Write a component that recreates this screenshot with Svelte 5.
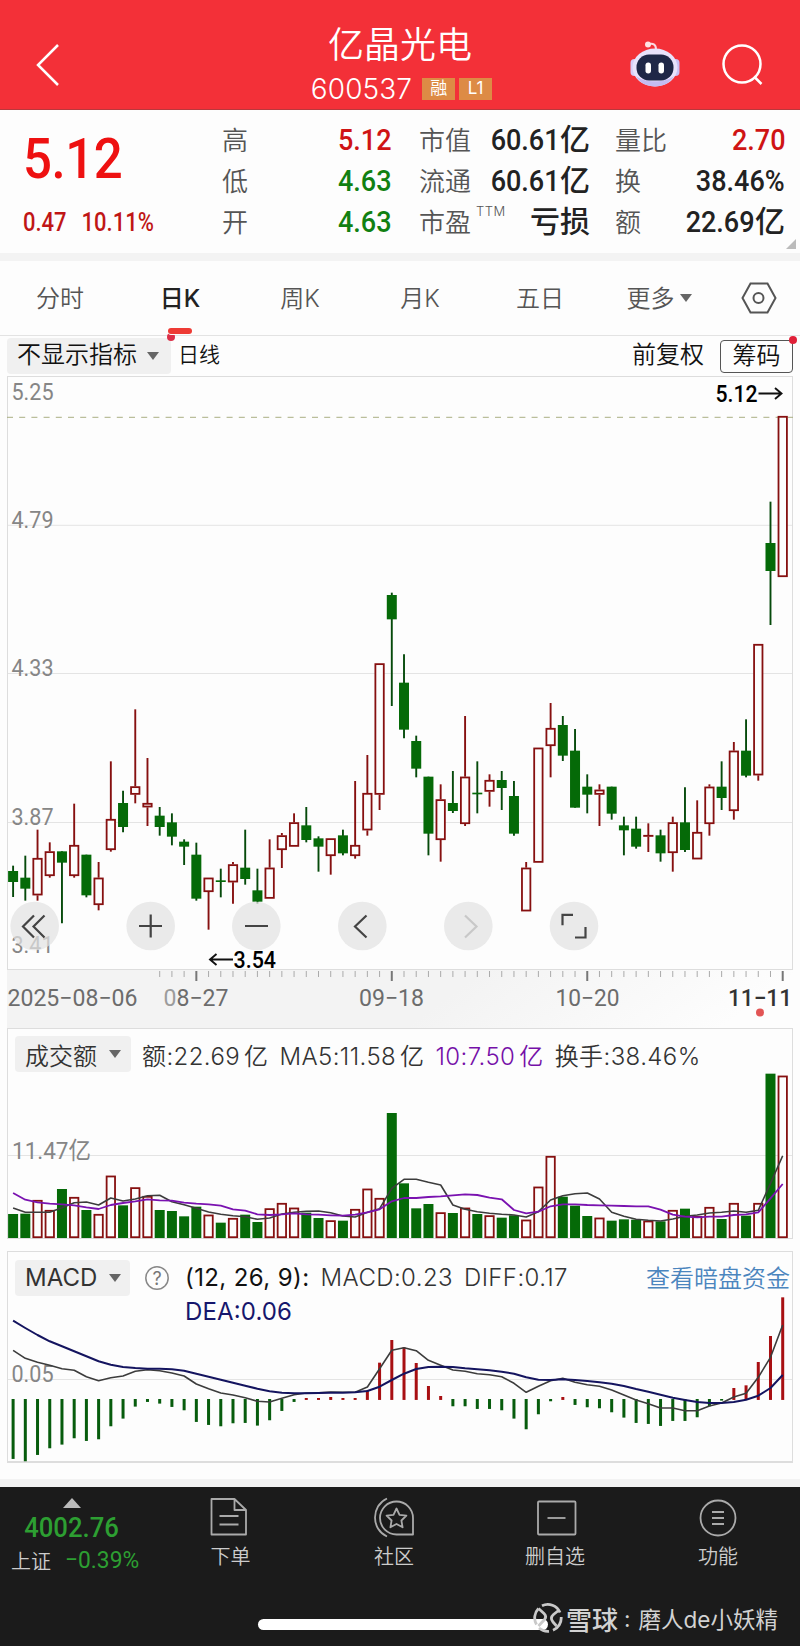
<script>
  // one entry per trading day: [direction, high, body top, body bottom, low]
  // values are device pixels at 3x density, see candleY
  const candles = [
    ['d', 617, 633, 666, 711], ['d', 587, 653, 686, 722], ['u', 509, 594, 706, 722], ['u', 547, 574, 648, 653],
    ['d', 574, 574, 608, 790], ['u', 431, 555, 648, 653], ['d', 584, 584, 706, 712], ['u', 606, 653, 735, 751],
    ['u', 304, 477, 570, 575], ['d', 392, 429, 501, 517], ['u', 148, 379, 404, 430], ['u', 294, 429, 442, 498],
    ['d', 441, 467, 501, 527], ['d', 460, 487, 530, 556], ['d', 538, 545, 560, 615], ['d', 548, 584, 716, 722],
    ['u', 653, 653, 696, 809], ['d', 626, 661, 666, 712], ['u', 606, 613, 667, 731], ['d', 509, 623, 657, 674],
    ['d', 626, 691, 725, 731], ['u', 538, 623, 716, 716], ['u', 519, 526, 570, 624], ['u', 460, 487, 560, 560],
    ['d', 441, 496, 540, 547], ['d', 529, 535, 560, 635], ['u', 535, 535, 588, 644], ['d', 509, 526, 580, 586],
    ['u', 363, 555, 588, 596], ['u', 285, 399, 511, 527], ['u', 10, 10, 404, 450], ['d', -202, -195, -122, 138],
    ['d', -17, 68, 209, 235], ['d', 227, 243, 326, 352], ['d', 350, 350, 521, 586], ['u', 373, 418, 540, 605],
    ['d', 333, 429, 453, 459], ['u', 168, 350, 492, 498], ['d', 304, 398, 403, 460], ['u', 343, 360, 395, 440],
    ['d', 333, 360, 384, 450], ['d', 363, 408, 521, 527], ['u', 606, 623, 754, 754], ['u', 263, 263, 608, 608],
    ['u', 129, 204, 258, 352], ['d', 168, 195, 287, 303], ['d', 207, 272, 443, 443], ['d', 343, 380, 404, 460],
    ['u', 373, 389, 404, 498], ['d', 380, 380, 461, 479], ['d', 470, 496, 511, 586], ['d', 470, 506, 560, 566],
    ['u', 490, 525, 530, 576], ['d', 509, 526, 580, 605], ['u', 470, 487, 579, 635], ['d', 382, 487, 570, 576],
    ['u', 421, 516, 598, 598], ['u', 373, 380, 492, 527], ['d', 304, 380, 414, 450], ['u', 246, 272, 453, 479],
    ['d', 178, 272, 347, 352], ['u', -48, -48, 346, 362], ['d', -475, -351, -267, -105], ['u', -732, -732, -249, -249]
  ];

  const volumes = [
    582, 581, 540, 570, 507, 531, 570, 582, 467, 556, 502, 528, 570, 573, 589, 560, 584, 608, 594, 584, 606, 565,
    549, 563, 578, 594, 601, 602, 567, 506, 534, 279, 490, 565, 552, 577, 579, 563, 582, 586, 593, 586, 599, 500,
    408, 530, 557, 588, 593, 602, 598, 599, 602, 604, 570, 566, 588, 561, 597, 549, 587, 549, 161, 167
  ];
  const ma5 = [
    564, 577, 577, 577, 563, 548, 546, 555, 534, 543, 537, 527, 526, 545, 554, 565, 576, 583, 587, 590, 598, 594,
    582, 577, 574, 573, 578, 588, 591, 577, 566, 505, 478, 478, 487, 495, 555, 568, 575, 580, 583, 585, 591, 575,
    540, 527, 521, 519, 537, 577, 589, 598, 601, 603, 597, 589, 585, 579, 577, 573, 577, 571, 490, 407
  ];
  const ma10 = [
    519, 539, 547, 551, 553, 556, 562, 567, 555, 549, 544, 538, 541, 542, 548, 551, 553, 557, 568, 572, 583, 585,
    583, 580, 583, 584, 586, 587, 584, 577, 568, 544, 534, 534, 531, 529, 526, 523, 525, 533, 538, 570, 580, 575,
    559, 553, 553, 555, 556, 557, 558, 559, 559, 569, 584, 590, 592, 590, 590, 585, 583, 577, 535, 492
  ];

  const macd = [
    641, 648, 629, 609, 598, 579, 587, 582, 543, 520, 484, 470, 475, 485, 495, 530, 539, 543, 534, 533, 541, 525,
    497, 470, 459, 459, 456, 459, 459, 436, 353, 285, 307, 354, 423, 453, 483, 483, 491, 491, 495, 520, 552, 507,
    468, 456, 479, 486, 489, 501, 517, 533, 536, 542, 527, 527, 516, 483, 466, 429, 421, 351, 273, 157
  ];
  const diff = [
    316, 340, 352, 361, 371, 376, 395, 407, 398, 393, 379, 374, 377, 384, 393, 417, 431, 444, 450, 458, 469, 471,
    460, 449, 444, 443, 441, 442, 442, 426, 371, 316, 308, 317, 346, 361, 375, 379, 386, 389, 395, 415, 442, 424,
    407, 400, 412, 419, 424, 435, 450, 465, 476, 489, 489, 497, 497, 483, 474, 456, 445, 397, 337, 240
  ];
  const dea = [
    227, 249, 270, 289, 304, 319, 334, 349, 359, 366, 369, 371, 371, 373, 377, 386, 395, 404, 413, 422, 431, 439,
    443, 445, 445, 444, 443, 443, 442, 438, 425, 405, 386, 372, 366, 365, 366, 370, 373, 376, 380, 386, 397, 404,
    405, 403, 405, 408, 412, 416, 423, 432, 440, 449, 458, 465, 471, 474, 474, 471, 464, 452, 429, 390
  ];

  const x = (i) => 13.1 + i * 12.216;
  const candleY = (v) => 660 + v / 3;
  const volY = (v) => 1020 + v / 3;
  const macdY = (v) => 1245 + v / 3;
  const line = (vals, y) => vals.map((v, i) => `${x(i).toFixed(1)},${y(v).toFixed(1)}`).join(' ');

  const labels = [
    { text: '5.25', y: 400 },
    { text: '4.79', y: 528 },
    { text: '4.33', y: 676 },
    { text: '3.87', y: 825 },
    { text: '3.41', y: 953 }
  ];
  const tabs = ['分时', '日K', '周K', '月K', '五日'];
  const ticks = candles.map((_, i) => i).filter((i) => i > 11);
</script>

<header class="top">
  <svg class="back" width="24" height="44" viewBox="0 0 24 44"><path d="M22 2 2 22 22 42" /></svg>
  <div class="title">
    <h1>亿晶光电</h1>
    <div class="code"><span class="num">600537</span><i>融</i><i>L1</i></div>
  </div>
  <div class="actions">
    <svg width="52" height="52" viewBox="0 0 52 52">
      <path d="M19 6.5c5-2 8 0 8 5" fill="none" stroke="#fbd9e2" stroke-width="2" />
      <circle cx="19" cy="6.5" r="3" fill="#ffe3e3" />
      <rect x="1.500" y="21" width="9" height="17" rx="4" fill="#d8cdf6" />
      <rect x="41.500" y="21" width="9" height="17" rx="4" fill="#c9c0f5" />
      <ellipse cx="26" cy="29.500" rx="22.500" ry="19" fill="#e9e2fb" />
      <path d="M7 38c7 14 31 14 38 0-8 7-30 7-38 0z" fill="#c4bcf2" />
      <rect x="7.500" y="16.500" width="37" height="26" rx="12.500" fill="#1f2747" />
      <rect x="16.500" y="24.500" width="5.500" height="11" rx="2.700" fill="#fff" />
      <rect x="29.500" y="24.500" width="5.500" height="11" rx="2.700" fill="#fff" />
    </svg>
    <svg class="search" width="44" height="44" viewBox="0 0 44 44"><circle cx="21" cy="21" r="18.500" /><path d="M33 33.500 40.500 41" /></svg>
  </div>
</header>

<section class="quote">
  <div class="price">
    <strong>5.12</strong>
    <div class="change"><span>0.47</span><span>10.11%</span></div>
  </div>
  <dl>
    <div><dt>高</dt><dd class="up"><b>5.12</b></dd></div>
    <div><dt>低</dt><dd class="down"><b>4.63</b></dd></div>
    <div><dt>开</dt><dd class="down"><b>4.63</b></dd></div>
  </dl>
  <dl>
    <div><dt>市值</dt><dd><b>60.61</b>亿</dd></div>
    <div><dt>流通</dt><dd><b>60.61</b>亿</dd></div>
    <div><dt>市盈<sup>TTM</sup></dt><dd>亏损</dd></div>
  </dl>
  <dl>
    <div><dt>量比</dt><dd class="up"><b>2.70</b></dd></div>
    <div><dt>换</dt><dd><b>38.46%</b></dd></div>
    <div><dt>额</dt><dd><b>22.69</b>亿</dd></div>
  </dl>
  <span class="corner"></span>
</section>

<nav>
  {#each tabs as tab}
    <span class:active={tab === '日K'}>{tab}</span>
  {/each}
  <span class="more">更多<i class="caret"></i></span>
  <svg width="36" height="32" viewBox="0 0 36 32">
    <path d="M9.500 1.500h17L34.500 16l-8 14.500h-17L1.500 16z" /><circle cx="17.500" cy="16" r="5" />
  </svg>
</nav>

<div class="toolbar">
  <button class="chip first">不显示指标<i class="caret"></i></button>
  <span class="period">日线</span>
  <span class="adjust">前复权</span>
  <button class="chips">筹码</button>
</div>

<svg class="chart" width="800" height="652" viewBox="0 376 800 652">
  <defs>
    <linearGradient id="fade" x1="0" x2="1" y1="0" y2="0.100">
      <stop offset="0.600" stop-color="#f3f3f3" />
      <stop offset="1" stop-color="#fdfdfd" />
    </linearGradient>
  </defs>
  <rect class="frame" x="7.500" y="376.500" width="785" height="593" />
  {#each [525.3, 673.5, 822.5] as y}
    <line class="grid" x1="8" x2="792" y1={y} y2={y} />
  {/each}
  {#each labels as l}
    <text class="axis" x="11.500" y={l.y} textLength="42" lengthAdjust="spacingAndGlyphs">{l.text}</text>
  {/each}
  <line class="last" x1="7" x2="793" y1="417.300" y2="417.300" />

  {#each candles as [dir, high, top, bottom, low], i}
    {#if dir === 'd'}
      <line class="wick-down" x1={x(i)} x2={x(i)} y1={candleY(high)} y2={candleY(low)} />
      <rect class="down-body" x={x(i) - 5} y={candleY(top)} width="10" height={(bottom - top) / 3} />
    {:else}
      <line class="wick-up" x1={x(i)} x2={x(i)} y1={candleY(high)} y2={candleY(top)} />
      <line class="wick-up" x1={x(i)} x2={x(i)} y1={candleY(bottom)} y2={candleY(low)} />
      <rect class="up-body" x={x(i) - 4.2} y={candleY(top) + 0.8} width="8.400" height={Math.max((bottom - top) / 3 - 1.6, 0.1)} />
    {/if}
  {/each}

  <text class="mark" x="715.500" y="402" textLength="42" lengthAdjust="spacingAndGlyphs">5.12</text>
  <path class="arrow" d="M758.500 393.500h22.500M775 388l6.500 5.500-6.500 5.500" />
  <text class="mark" x="233.500" y="967.500" textLength="42.500" lengthAdjust="spacingAndGlyphs">3.54</text>
  <path class="arrow" d="M233 959.500h-22.500M216.500 954l-6.500 5.500 6.500 5.500" />

  {#each [34.7, 150.7, 256.3, 362.3, 468.3, 574] as cx}
    <circle class="round" {cx} cy="926" r="24.300" />
  {/each}
  <path class="icon" d="M34 915.500 23 926.500 34 937.500M44.500 915.500 33.500 926.500 44.500 937.500" />
  <path class="icon" d="M139 926h23M150.700 914.500v23M245 926h23" />
  <path class="icon" d="M366.500 915.500 355 926.500 366.500 937.500" />
  <path class="icon off" d="M465 915.500 476.500 926.500 465 937.500" />
  <path class="icon" d="M573 914.800h-10.500v10.500M575 937.500h10.500v-10.500" />

  <rect x="7" y="970" width="786" height="58" fill="url(#fade)" />
  {#each ticks as i}
    <line class="tick" class:major={i % 16 === 15} x1={x(i)} x2={x(i)} y1="971" y2={i % 16 === 15 ? 981 : 977} />
  {/each}
  <g class="dates">
    <text x="7.500" y="1006" textLength="130" lengthAdjust="spacingAndGlyphs">2025−08−06</text>
    <text x="163.500" y="1006" textLength="65" lengthAdjust="spacingAndGlyphs"><tspan fill="#9c9c9c">0</tspan>8−27</text>
    <text x="359" y="1006" textLength="65" lengthAdjust="spacingAndGlyphs">09−18</text>
    <text x="555.500" y="1006" textLength="64" lengthAdjust="spacingAndGlyphs">10−20</text>
    <text class="today" x="728" y="1006" textLength="64" lengthAdjust="spacingAndGlyphs">11−11</text>
  </g>
  <circle cx="760" cy="1012.500" r="4" fill="#e25555" />
</svg>

<section class="panel volume">
  <div class="legend">
    <button class="chip">成交额<i class="caret"></i></button>
    <span class="val">额:22.69<em>亿</em></span>
    <span class="val">MA5:11.58<em>亿</em></span>
    <span class="val purple">10:7.50<em>亿</em></span>
    <span class="val">换手:38.46%</span>
  </div>
  <svg width="784" height="166" viewBox="8 1073 784 166">
    <line class="grid" x1="8" x2="792" y1="1155.500" y2="1155.500" />
    <text class="axis" x="12" y="1159" textLength="79" lengthAdjust="spacingAndGlyphs">11.47亿</text>
    {#each volumes as v, i}
      {#if candles[i][0] === 'd'}
        <rect class="down-body" x={x(i) - 5} y={volY(v)} width="10" height={1238 - volY(v)} />
      {:else}
        <rect class="up-body" x={x(i) - 4.2} y={volY(v) + 0.8} width="8.400" height={1236.4 - volY(v)} />
      {/if}
    {/each}
    <polyline class="dark-line" points={line(ma5, volY)} />
    <polyline class="purple-line" points={line(ma10, volY)} />
  </svg>
</section>

<section class="panel macd">
  <div class="legend">
    <button class="chip">MACD<i class="caret"></i></button>
    <svg class="help" width="26" height="26" viewBox="0 0 26 26">
      <circle cx="13" cy="13" r="11.200" /><text x="13" y="19.500" text-anchor="middle">?</text>
    </svg>
    <span class="params">(12, 26, 9):</span>
    <span class="val">MACD:0.23</span>
    <span class="val">DIFF:0.17</span>
    <a href="#dark">查看暗盘资金</a>
  </div>
  <svg width="784" height="165" viewBox="8 1296 784 165">
    <line class="grid" x1="8" x2="792" y1="1379.500" y2="1379.500" />
    <text class="axis" x="11.500" y="1382" textLength="42" lengthAdjust="spacingAndGlyphs">0.05</text>
    <text class="dea" x="185" y="1319.500" textLength="107">DEA:0.06</text>
    {#each macd as v, i}
      <rect
        class={v > 463 ? 'bar-down' : 'bar-up'}
        x={x(i) - 1.5}
        y={macdY(Math.min(v, 462))}
        width="3"
        height={Math.abs(v - 463) / 3 + 0.6}
      />
    {/each}
    <polyline class="dark-line" points={line(diff, macdY)} />
    <polyline class="navy-line" points={line(dea, macdY)} />
  </svg>
</section>

<footer>
  <div class="menu">
    <div class="index">
      <i class="tri"></i>
      <strong>4002.76</strong>
      <div><span>上证</span><b>−0.39%</b></div>
    </div>
    <div class="item order">
      <svg width="40" height="42" viewBox="0 0 40 42">
        <path d="M4.500 2h21L37 13v24.500H2.500V2zM25.500 2v11H37M10.500 19h19M10.500 27.500h19" />
      </svg>
      <span>下单</span>
    </div>
    <div class="item community">
      <svg width="44" height="42" viewBox="0 0 44 42">
        <path d="M15 1.500C-1 9-1 32 15 39.500" />
        <path d="M24.500 4.500a16.500 16.500 0 1 0 0 33H41V21A16.500 16.500 0 0 0 24.500 4.500z" />
        <path d="m24.500 11.500 3 6.300 6.900.9-5 4.800 1.200 6.800-6.100-3.300-6.100 3.300 1.200-6.800-5-4.800 6.900-.9z" />
      </svg>
      <span>社区</span>
    </div>
    <div class="item remove">
      <svg width="40" height="42" viewBox="0 0 40 42">
        <rect x="1" y="4.500" width="37.500" height="33" rx="1" /><path d="M10.500 21h18" />
      </svg>
      <span>删自选</span>
    </div>
    <div class="item tools">
      <svg width="40" height="42" viewBox="0 0 40 42">
        <circle cx="20" cy="21" r="17.500" /><path d="M14 15h12M14 21h12M14 27h12" />
      </svg>
      <span>功能</span>
    </div>
  </div>
  <div class="home"></div>
  <div class="watermark">
    <svg width="30" height="30" viewBox="0 0 30 30">
      <path d="M9 2.800A13.300 13.300 0 0 1 27 9.500M28.200 14A13.300 13.300 0 0 1 20 27.200M16 28.300A13.300 13.300 0 0 1 6 25M3.500 21.500A13.300 13.300 0 0 1 5.500 5.500" />
      <path d="M5.500 5.500 11 10.500q3 3 .5 6L5.500 23M25.500 7.500l-5 4q-4 3.500-.5 7.500l3.500 4" />
    </svg>
    <b>雪球</b><span class="colon">:</span><span>磨人de小妖精</span>
  </div>
</footer>

<style>
  :global(body) { background: #fdfdfd; }
  :global(#app) { width: 800px; font-family: Inter, 'Noto Sans CJK SC', sans-serif; color: #222; }
  button { border: 0; font: inherit; color: inherit; padding: 0; }
  i { font-style: normal; }
  svg { display: block; }

  .top {
    display: grid; grid-template-columns: 200px 1fr 200px; align-items: start;
    height: 109px; background: #f33038; border-bottom: 1px solid #b8383c; color: #fff;
  }
  .back { margin: 43px 0 0 36px; }
  .back path, .search { fill: none; stroke: #fff; stroke-width: 2.5; }
  .title { text-align: center; }
  h1 { margin: 23px 0 0; font-size: 36px; line-height: 44px; font-weight: 350; }
  .code { display: flex; justify-content: center; align-items: center; margin: 4px 0 0 3px; height: 35px; gap: 4px; }
  .num { font-size: 28px; letter-spacing: .1px; margin-right: 6px; font-weight: 350; }
  .code i { width: 33px; height: 22px; line-height: 21px; background: #dd8b45; font-size: 17px; }
  .actions { display: flex; align-items: flex-start; gap: 40px; padding: 38px 0 0 29px; }
  .search { margin-top: 5px; }

  .quote {
    position: relative; display: grid; grid-template-columns: 200px 168px 169px 168px;
    box-sizing: border-box; height: 151px; padding-left: 22px; border-bottom: 8px solid #f3f3f3;
  }
  .quote dl { margin-right: -1px; }
  .quote dl + dl { margin-left: 29px; margin-right: -31px; }
  .quote dl + dl + dl { margin-left: 56px; margin-right: -58px; }
  .price strong {
    display: block; margin-top: 16px; font: 500 56px/66px Roboto, sans-serif; color: #ee1111;
    transform: scaleX(.91); transform-origin: left; letter-spacing: -.5px; margin-left: 1px;
  }
  .change { display: flex; gap: 17px; margin: 14px 0 0 1px; font: 500 25px/34px Roboto, sans-serif; color: #c01616; transform: scaleX(.88); transform-origin: left; }
  dl { margin: 9px 0 0; }
  dl > div { display: flex; justify-content: space-between; height: 41px; line-height: 41px; }
  dt { position: relative; font-size: 26px; color: #555; font-weight: 350; white-space: nowrap; padding-top: 1px; }
  dd { margin: 0; font-size: 30px; font-weight: 500; color: #222; white-space: nowrap; }
  dd b { display: inline-block; font: 500 30px/41px Roboto, sans-serif; transform: scaleX(.9); transform-origin: right; }
  sup { position: absolute; left: 57px; top: -10px; font-size: 13px; letter-spacing: .5px; }
  .up { color: #cf1414; }
  .down { color: #118011; }
  .corner { position: absolute; right: 4px; bottom: 4px; border: 5px solid; border-color: transparent #bbb #bbb transparent; }

  nav { display: flex; align-items: center; height: 74px; border-bottom: 1px solid #e3e3e3; }
  nav span { position: relative; top: -2px; width: 120px; text-align: center; font-size: 24px; font-weight: 350; color: #555; }
  nav .active { color: #222; font-weight: 500; }
  .active::before {
    content: ''; position: absolute; left: 47px; top: 54px; width: 8px; height: 8px; border-radius: 50%;
    background: #dc2f48;
  }
  .active::after {
    content: ''; position: absolute; left: 48px; top: 49px; width: 24px; height: 6px; border-radius: 3px;
    background: #ee3b35; box-shadow: 0 1px #fdfdfd;
  }
  nav svg { margin-left: 21px; fill: none; stroke: #555; stroke-width: 2; }
  .caret { display: inline-block; border: 6px solid transparent; border-top: 8px solid #666; border-bottom: 0; vertical-align: middle; }
  .more .caret { margin: -4px 0 0 5px; }
  nav .more { width: 118px; }
  nav .more + svg { margin-left: 23px; }

  .toolbar { display: flex; align-items: center; height: 40px; font-size: 24px; line-height: 34px; color: #111; font-weight: 350; padding: 0 7px; }
  .toolbar span { padding-bottom: 2px; }
  .chip { display: flex; align-items: center; flex: none; box-sizing: border-box; height: 36px; background: #f0f0f0; border-radius: 4px; padding: 0 10px; }
  .chip .caret { margin-left: 12px; }
  .first { width: 164px; white-space: nowrap; padding: 0 0 2px 10px; }
  .first .caret { margin: 2px 0 0 10px; }
  .period { font-size: 21px; margin-left: 7px; }
  .adjust { margin-left: auto; }
  .chips { position: relative; box-sizing: border-box; width: 73px; height: 33px; margin-left: 16px; border: 1px solid #555; border-radius: 4px; background: none; line-height: 30px; }
  .chips::after { content: ''; position: absolute; right: -5px; top: -5px; width: 8px; height: 8px; border-radius: 50%; background: #e02038; }

  .frame { fill: none; stroke: #ddd; }
  .grid { stroke: #e4e4e4; }
  .axis { font: 24px Roboto, 'Noto Sans CJK SC', sans-serif; fill: #868686; }
  .last { stroke: #a9ae82; stroke-dasharray: 6 6.2; }
  .wick-down { stroke: #064a0b; stroke-width: 1.9; }
  .wick-up { stroke: #861010; stroke-width: 1.9; }
  .down-body { fill: #056a08; }
  .up-body { fill: #fdfdfd; stroke: #861010; stroke-width: 1.8; }
  .mark { font: 500 23.500px Roboto, sans-serif; fill: #000; }
  .arrow { fill: none; stroke: #111; stroke-width: 1.9; }
  .round { fill: #e2e2e2; opacity: .72; }
  .icon { fill: none; stroke: #444; stroke-width: 2.2; }
  .off { stroke: #c8c8c8; }
  .tick { stroke: #aaa; }
  .major { stroke: #777; stroke-width: 2; }
  .dates { font: 23.500px Roboto, sans-serif; fill: #6c6c6c; }
  .today { fill: #333; font-weight: 500; }

  .panel { margin: 0 7px; border: 1px solid #ddd; }
  .panel > svg { overflow: visible; }
  .volume { height: 209px; }
  .macd { height: 209px; margin-top: 12px; border-bottom-width: 2px; }
  .legend { display: flex; align-items: center; box-sizing: border-box; height: 44px; padding: 6px 0 0 7px; font-size: 24px; font-weight: 350; color: #333; white-space: nowrap; }
  .volume .chip { width: 116px; font-weight: 350; }
  .val { margin-left: 11px; letter-spacing: .4px; }
  em { font-style: normal; margin-left: 4px; }
  .purple { color: #7510a8; }
  .macd .chip { width: 115px; font-weight: 400; }
  .macd .legend { padding-top: 7px; }
  .help { margin-left: 14px; fill: none; stroke: #888; stroke-width: 1.500; }
  .help text { font: 18px Inter, sans-serif; fill: #777; stroke: none; }
  .params { margin-left: 15px; color: #111; font-weight: 400; letter-spacing: .4px; }
  .legend a { margin-left: auto; color: #4b85be; text-decoration: none; margin-right: 2px; padding-bottom: 2px; }
  .dea { font: 24px Inter, sans-serif; fill: #16166c; }
  .dark-line, .purple-line, .navy-line { fill: none; stroke: #3c3c3c; stroke-width: 1.600; stroke-linejoin: round; }
  .purple-line { stroke: #7a12b0; stroke-width: 1.800; }
  .navy-line { stroke: #14145f; stroke-width: 2; }
  .bar-down { fill: #075c0d; }
  .bar-up { fill: #a80f12; }

  footer { box-sizing: border-box; margin-top: 16px; border-top: 8px solid #f3f3f3; height: 167px; background: #1b1b1b; overflow: hidden; position: relative; color: #ccc; }
  .menu { display: flex; height: 90px; }
  .index { width: 143px; text-align: center; white-space: nowrap; }
  .tri { display: block; width: 0; margin: 11px auto 0; border: 9px solid transparent; border-bottom: 10px solid #bbb; border-top: 0; }
  .index strong { display: block; font: 500 28.500px/32px Roboto, sans-serif; color: #2d9f32; margin-top: 4px; transform: scaleX(.9); }
  .index div { display: flex; align-items: center; padding-left: 11px; height: 31px; font-size: 20px; font-weight: 350; }
  .index span { flex: none; padding-top: 2px; }
  .index b { flex: none; font: 400 24.500px/30px Roboto, sans-serif; color: #2d9f32; margin-left: 14px; transform: scaleX(.93); transform-origin: left; }
  .item { display: flex; flex: none; flex-direction: column; align-items: center; padding-top: 10px; width: 80px; font-size: 20px; font-weight: 350; }
  .item svg { fill: none; stroke: #aaa; stroke-width: 1.800; stroke-linejoin: round; }
  .item span { line-height: 28px; margin-top: 4px; }
  .order { margin-left: 46px; }
  .order span { margin-left: 3px; }
  .community { margin-left: 85px; }
  .remove { margin-left: 83px; }
  .remove span { margin-right: 4px; }
  .tools { margin-left: 81px; }
  .home { position: absolute; left: 258px; top: 131.500px; width: 290px; height: 11px; border-radius: 6px; background: #fff; }
  .watermark { position: absolute; left: 533px; top: 113px; display: flex; align-items: center; height: 36px; font-size: 22.500px; white-space: nowrap; color: #d2d2d2; }
  .watermark svg { fill: none; stroke: #c9c9c9; stroke-width: 2.800; margin-right: 3px; }
  .watermark b { font-size: 26px; font-weight: 500; }
  .colon { margin: 0 8px 0 6px; }
</style>
